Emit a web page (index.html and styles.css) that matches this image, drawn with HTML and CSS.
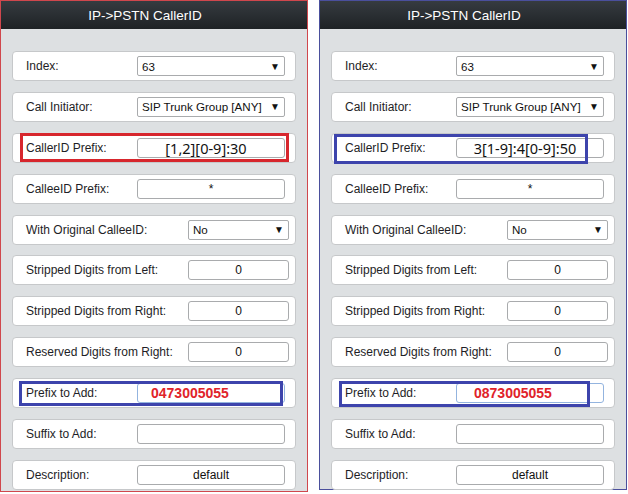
FILE: index.html
```html
<!DOCTYPE html>
<html>
<head>
<meta charset="utf-8">
<link rel="stylesheet" href="styles.css">
</head>
<body>
<div class="page">
  <div class="panel panel-red">
    <div class="head">IP-&gt;PSTN CallerID</div>
    <div class="body">
      <div class="card"><span class="lbl">Index:</span><div class="sel">63<span class="arr">&#9660;</span></div></div>
      <div class="card"><span class="lbl">Call Initiator:</span><div class="sel">SIP Trunk Group [ANY]<span class="arr">&#9660;</span></div></div>
      <div class="card"><span class="lbl">CallerID Prefix:</span><div class="inp big">[1,2][0-9]:30</div><div class="mark mark-red mark-l1"></div></div>
      <div class="card"><span class="lbl">CalleeID Prefix:</span><div class="inp">*</div></div>
      <div class="card"><span class="lbl">With Original CalleeID:</span><div class="sel wide">No<span class="arr">&#9660;</span></div></div>
      <div class="card"><span class="lbl">Stripped Digits from Left:</span><div class="inp wide">0</div></div>
      <div class="card"><span class="lbl">Stripped Digits from Right:</span><div class="inp wide">0</div></div>
      <div class="card"><span class="lbl">Reserved Digits from Right:</span><div class="inp wide">0</div></div>
      <div class="card"><span class="lbl">Prefix to Add:</span><div class="inp focus num">0473005055</div><div class="mark mark-blue mark-l2"></div></div>
      <div class="card"><span class="lbl">Suffix to Add:</span><div class="inp"></div></div>
      <div class="card"><span class="lbl">Description:</span><div class="inp">default</div></div>
    </div>
  </div>
  <div class="panel panel-blue">
    <div class="head">IP-&gt;PSTN CallerID</div>
    <div class="body">
      <div class="card"><span class="lbl">Index:</span><div class="sel">63<span class="arr">&#9660;</span></div></div>
      <div class="card"><span class="lbl">Call Initiator:</span><div class="sel">SIP Trunk Group [ANY]<span class="arr">&#9660;</span></div></div>
      <div class="card"><span class="lbl">CallerID Prefix:</span><div class="inp big">3[1-9]:4[0-9]:50</div><div class="mark mark-blue mark-r1"></div></div>
      <div class="card"><span class="lbl">CalleeID Prefix:</span><div class="inp">*</div></div>
      <div class="card"><span class="lbl">With Original CalleeID:</span><div class="sel wide">No<span class="arr">&#9660;</span></div></div>
      <div class="card"><span class="lbl">Stripped Digits from Left:</span><div class="inp wide">0</div></div>
      <div class="card"><span class="lbl">Stripped Digits from Right:</span><div class="inp wide">0</div></div>
      <div class="card"><span class="lbl">Reserved Digits from Right:</span><div class="inp wide">0</div></div>
      <div class="card"><span class="lbl">Prefix to Add:</span><div class="inp focus num num-r">0873005055</div><div class="mark mark-blue mark-r2"></div></div>
      <div class="card"><span class="lbl">Suffix to Add:</span><div class="inp"></div></div>
      <div class="card"><span class="lbl">Description:</span><div class="inp">default</div></div>
    </div>
  </div>
</div>
</body>
</html>
```
FILE: styles.css
```css
html, body {
  margin: 0;
  padding: 0;
  background: #ffffff;
}
body {
  font-family: "Liberation Sans", Arial, sans-serif;
  font-size: 12px;
  color: #1e1e26;
}
.page {
  display: flex;
  gap: 11px;
  width: 627px;
}
.panel {
  width: 308px;
  height: 492px;
  box-sizing: border-box;
  background: #dde0e2;
  display: flex;
  flex-direction: column;
}
.panel-red {
  border: 1px solid #d0474d;
}
.panel-blue {
  border: 1px solid #4a4f9c;
  height: 490px;
}
.head {
  height: 28px;
  flex: none;
  background: linear-gradient(#363b40, #1e2225);
  color: #ffffff;
  font-size: 13.5px;
  display: flex;
  align-items: center;
  justify-content: center;
  padding-right: 18px;
}
.body {
  padding: 22px 11px 0 11px;
  display: flex;
  flex-direction: column;
  gap: 10.9px;
}
.card {
  position: relative;
  height: 30px;
  box-sizing: border-box;
  background: #ffffff;
  border: 1px solid #c6c8ca;
  border-radius: 4px;
  display: flex;
  align-items: center;
  padding: 0 10px 0 13px;
}
.lbl {
  flex: 1;
  white-space: nowrap;
}
.sel, .inp {
  width: 148px;
  height: 20px;
  box-sizing: border-box;
  border: 1px solid #a9abad;
  border-radius: 3px;
  background: #ffffff;
  display: flex;
  align-items: center;
  color: #111;
  white-space: nowrap;
}
.sel {
  padding: 0 4px 0 4px;
  font-size: 11.6px;
  border-radius: 2px;
}
.arr {
  margin-left: auto;
  font-size: 10px;
  color: #111;
}
.inp {
  justify-content: center;
}
.wide {
  width: 101px;
  margin-right: -4px;
}
.big {
  font-family: "Noto Sans", sans-serif;
  font-size: 14.5px;
  padding-right: 10px;
}
.focus {
  border-color: #93b4df;
}
.num {
  justify-content: flex-start;
  padding-left: 13px;
  color: #e0232a;
  font-weight: bold;
  font-size: 14px;
}
.num-r {
  padding-left: 17px;
}
.mark {
  position: absolute;
  border: 3px solid;
  box-sizing: border-box;
}
.mark-red {
  border-color: #d7262d;
}
.mark-blue {
  border-color: #3d44ac;
}
.mark-l1 {
  left: 7px;
  right: 6px;
  top: -1px;
  bottom: 0px;
}
.mark-r1 {
  left: 2px;
  right: 26px;
  top: 0px;
  bottom: -2px;
}
.mark-l2 {
  left: 6px;
  right: 12px;
  top: 2px;
  bottom: 1px;
}
.mark-r2 {
  left: 7px;
  right: 24px;
  top: 2px;
  bottom: 0px;
}
```
